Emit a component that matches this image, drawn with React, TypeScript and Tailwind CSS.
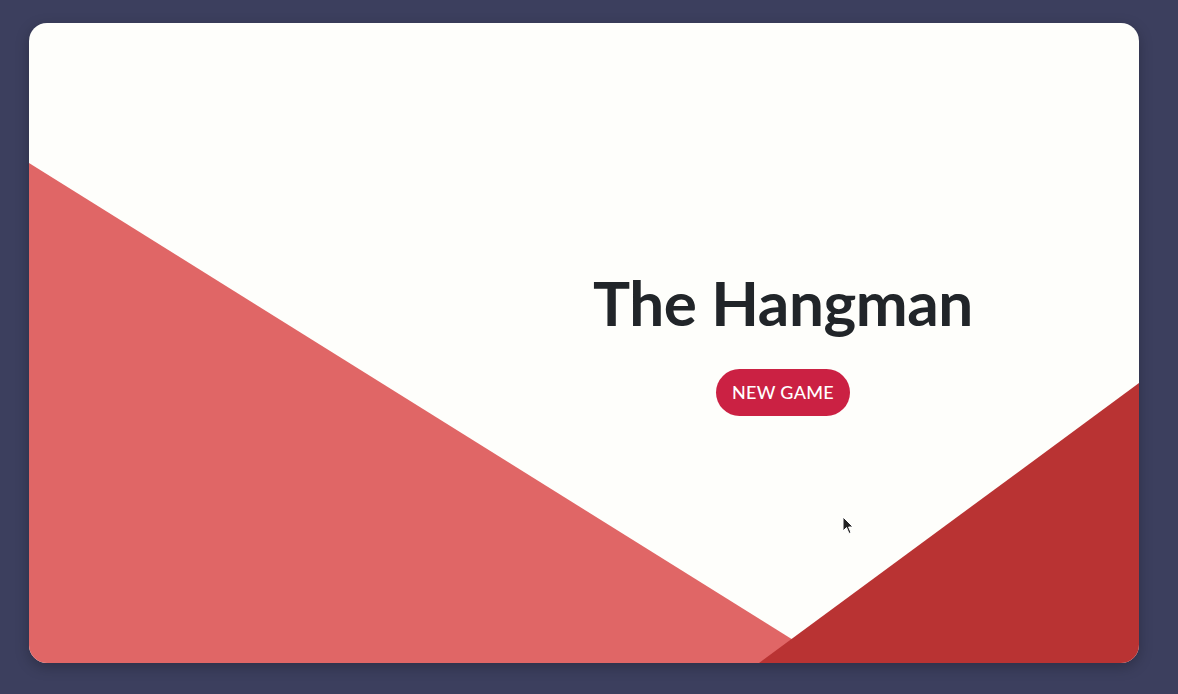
export default function App() {
  return (
    <div className="w-[1178px] h-[694px] bg-[#3c3f5e] pt-[23px] pl-[29px]" style={{ fontFamily: 'Lato, "Noto Sans", sans-serif' }}>
      <div className="relative w-[1110px] h-[640px] rounded-[18px] bg-[#fefefb] overflow-hidden shadow-[0_4px_14px_rgba(0,0,0,0.25)]">
        {/* background shapes */}
        <svg className="absolute inset-0" width="1110" height="640" viewBox="0 0 1110 640">
          <polygon points="0,140 801,640 0,640" fill="#e06666" />
          <polygon points="1110,360 1110,640 730,640" fill="#b93333" />
        </svg>

        <div className="relative h-full flex flex-col items-center justify-center pl-[398px]">
          <h1 className="text-[62px] leading-none font-bold text-[#212529] tracking-[-0.4px] pb-[3px]">The Hangman</h1>
          <button className="mt-[33px] h-[47px] px-[16px] rounded-full bg-[#cb2143] text-white text-[18px] font-medium tracking-[0.3px]">
            NEW GAME
          </button>
        </div>

        {/* mouse cursor */}
        <svg className="absolute left-[813px] top-[493px]" width="12" height="19" viewBox="0 0 12 19">
          <path d="M1 1 L1 15 L4.5 11.5 L7 17.5 L9 16.6 L6.6 11 L11 11 Z" fill="#222" stroke="#fff" strokeWidth="1" />
        </svg>
      </div>
    </div>
  )
}
